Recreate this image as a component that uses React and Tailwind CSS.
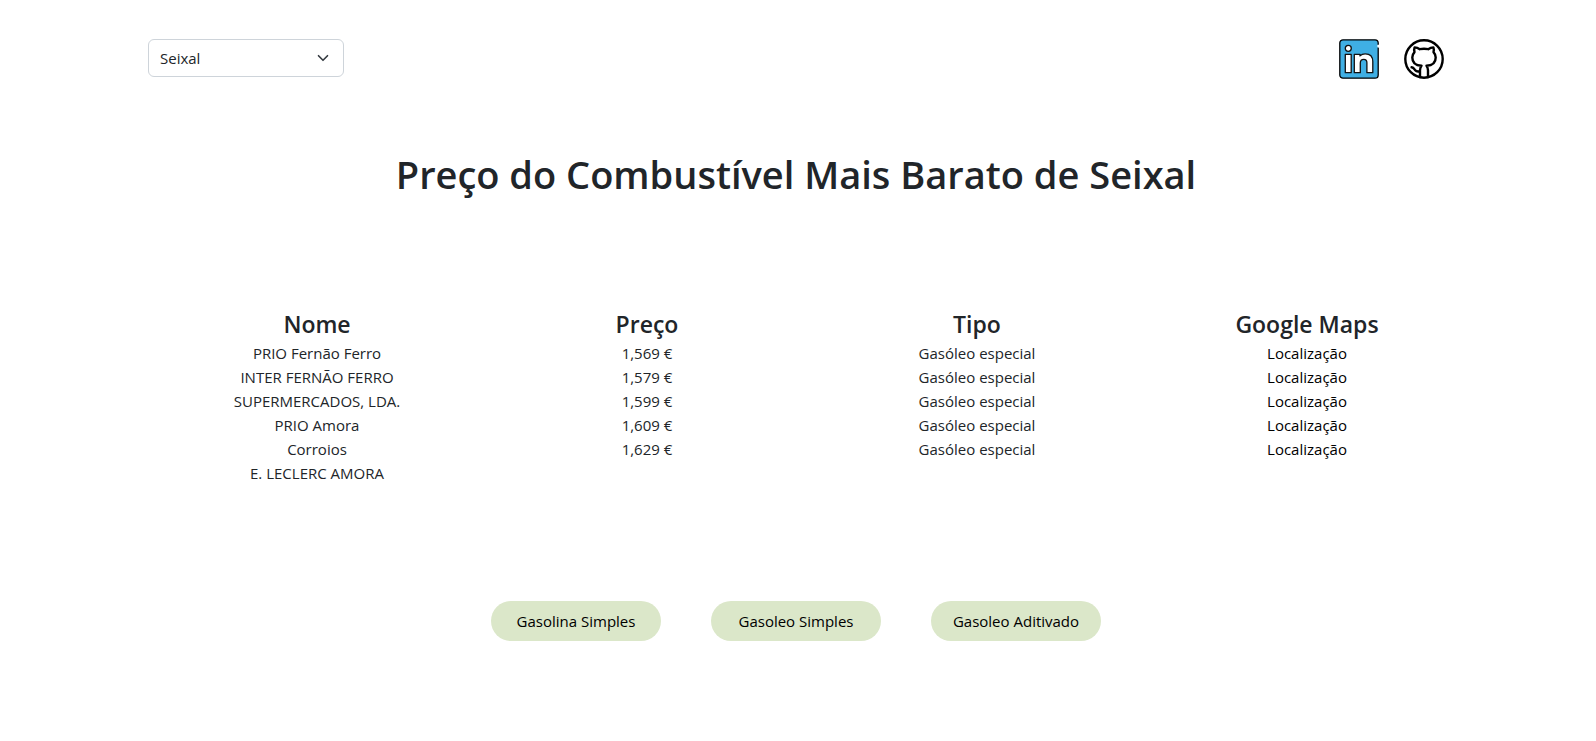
const columns = [
  {
    title: "Nome",
    items: [
      "PRIO Fernão Ferro",
      "INTER FERNÃO FERRO SUPERMERCADOS, LDA.",
      "PRIO Amora",
      "Corroios",
      "E. LECLERC AMORA",
    ],
  },
  { title: "Preço", items: ["1,569 €", "1,579 €", "1,599 €", "1,609 €", "1,629 €"] },
  { title: "Tipo", items: Array(5).fill("Gasóleo especial") },
  { title: "Google Maps", items: Array(5).fill("Localização"), links: true },
];

const fuels = ["Gasolina Simples", "Gasoleo Simples", "Gasoleo Aditivado"];

function LinkedInIcon() {
  return (
    <svg viewBox="0 0 40 40" className="size-10" aria-hidden="true">
      <rect x="0.8" y="0.8" width="38.4" height="38.4" rx="3" fill="#3fafe4" />
      <path
        d="M39.2 8.5V36a3.2 3.2 0 0 1-3.2 3.2H4A3.2 3.2 0 0 1 .8 36V4A3.2 3.2 0 0 1 4 .8h32A3.2 3.2 0 0 1 39.2 4v2"
        fill="none"
        stroke="#000"
        strokeWidth="1.3"
      />
      <path d="M39.2 5.8v2.4" stroke="#fff" strokeWidth="1.6" />
      <g fill="#fff" stroke="#111" strokeWidth="1.3" strokeLinejoin="round">
        <circle cx="9.3" cy="9.3" r="3" />
        <path d="M6.3 15.3h5.9v18.4H6.3z" />
        <path d="M15.3 15.3h5.7v1.6c1.3-1.4 3-2.1 5.2-2.1 4.9 0 7.6 3 7.6 7.8v11.100h-5.900V23.700c0-2.100-1.100-3.300-3.100-3.300-2.200 0-3.500 1.300-3.500 3.600v9.700h-6z" />
      </g>
    </svg>
  );
}

function GitHubIcon() {
  return (
    <svg viewBox="0 0 40 40" className="size-10" aria-hidden="true">
      <g fill="none" stroke="#000" strokeWidth="2.4" strokeLinecap="round" strokeLinejoin="round">
        <circle cx="20" cy="20" r="18.7" />
        <path d="M16 38v-6.700c0-2 .4-3.300 1.500-4.600C11.500 26.500 8.300 23.500 8.300 18.500c0-2.100.8-3.900 2.200-5.400-.5-1.700-.4-3.300.1-4.700 2 .1 3.700.8 5.200 1.800 2.800-.6 5.600-.6 8.400 0 1.500-1 3.200-1.700 5.200-1.800.5 1.400.6 3 .1 4.700 1.400 1.500 2.200 3.300 2.200 5.400 0 5-3.200 8-9.200 8.200 1.100 1.300 1.500 2.600 1.500 4.600V38" />
        <path d="M7.600 28.300c2.200.2 2.600 1.800 3.600 3 1 1.200 2.700 1.400 4.600 1" />
      </g>
    </svg>
  );
}

export default function App() {
  return (
    <div className="min-h-screen bg-white pr-1 font-['Open_Sans','Noto_Sans',sans-serif] text-[15px] leading-6 text-[#212529]">
      <div className="mx-auto max-w-[1320px]">
        <header className="flex items-start justify-between px-3 pt-[39px]">
          <div className="relative w-49">
            <select
              aria-label="Concelho"
              defaultValue="Seixal"
              className="h-[38px] w-full appearance-none rounded-md border border-[#ced4da] bg-white pr-9 pl-[11px]"
            >
              <option>Seixal</option>
            </select>
            <svg
              viewBox="0 0 16 16"
              className="pointer-events-none absolute top-[13px] right-[15px] size-3"
              aria-hidden="true"
            >
              <path
                d="m2 5 6 6 6-6"
                fill="none"
                stroke="#343a40"
                strokeWidth="2.2"
                strokeLinecap="round"
                strokeLinejoin="round"
              />
            </svg>
          </div>
          <nav className="flex gap-[25px]" aria-label="Redes sociais">
            <a href="#linkedin" aria-label="LinkedIn">
              <LinkedInIcon />
            </a>
            <a href="#github" aria-label="GitHub">
              <GitHubIcon />
            </a>
          </nav>
        </header>

        <main>
          <h1 className="mt-[71px] text-center text-[38px] leading-12 font-semibold">
            Preço do Combustível Mais Barato de Seixal
          </h1>

          <table className="mt-28 w-full table-fixed text-center">
            <thead>
              <tr>
                {columns.map(({ title }) => (
                  <th key={title} scope="col" className="p-0 pl-8 text-[23px] leading-7 font-semibold">
                    {title}
                  </th>
                ))}
              </tr>
            </thead>
            <tbody>
              <tr>
                {columns.map(({ title, items, links }) => (
                  <td key={title} className="p-0 pt-[3px] pl-8 align-top">
                    <ul className="mx-auto max-w-50">
                      {items.map((item, i) => (
                        <li key={i}>
                          {links ? (
                            <a href="#mapa" className="text-black">
                              {item}
                            </a>
                          ) : (
                            item
                          )}
                        </li>
                      ))}
                    </ul>
                  </td>
                ))}
              </tr>
            </tbody>
          </table>

          <div className="mt-29 flex flex-wrap justify-center gap-[50px] pb-10">
            {fuels.map((fuel) => (
              <button key={fuel} type="button" className="h-10 w-[170px] rounded-full bg-[#dbe7c9] text-black">
                {fuel}
              </button>
            ))}
          </div>
        </main>
      </div>
    </div>
  );
}
